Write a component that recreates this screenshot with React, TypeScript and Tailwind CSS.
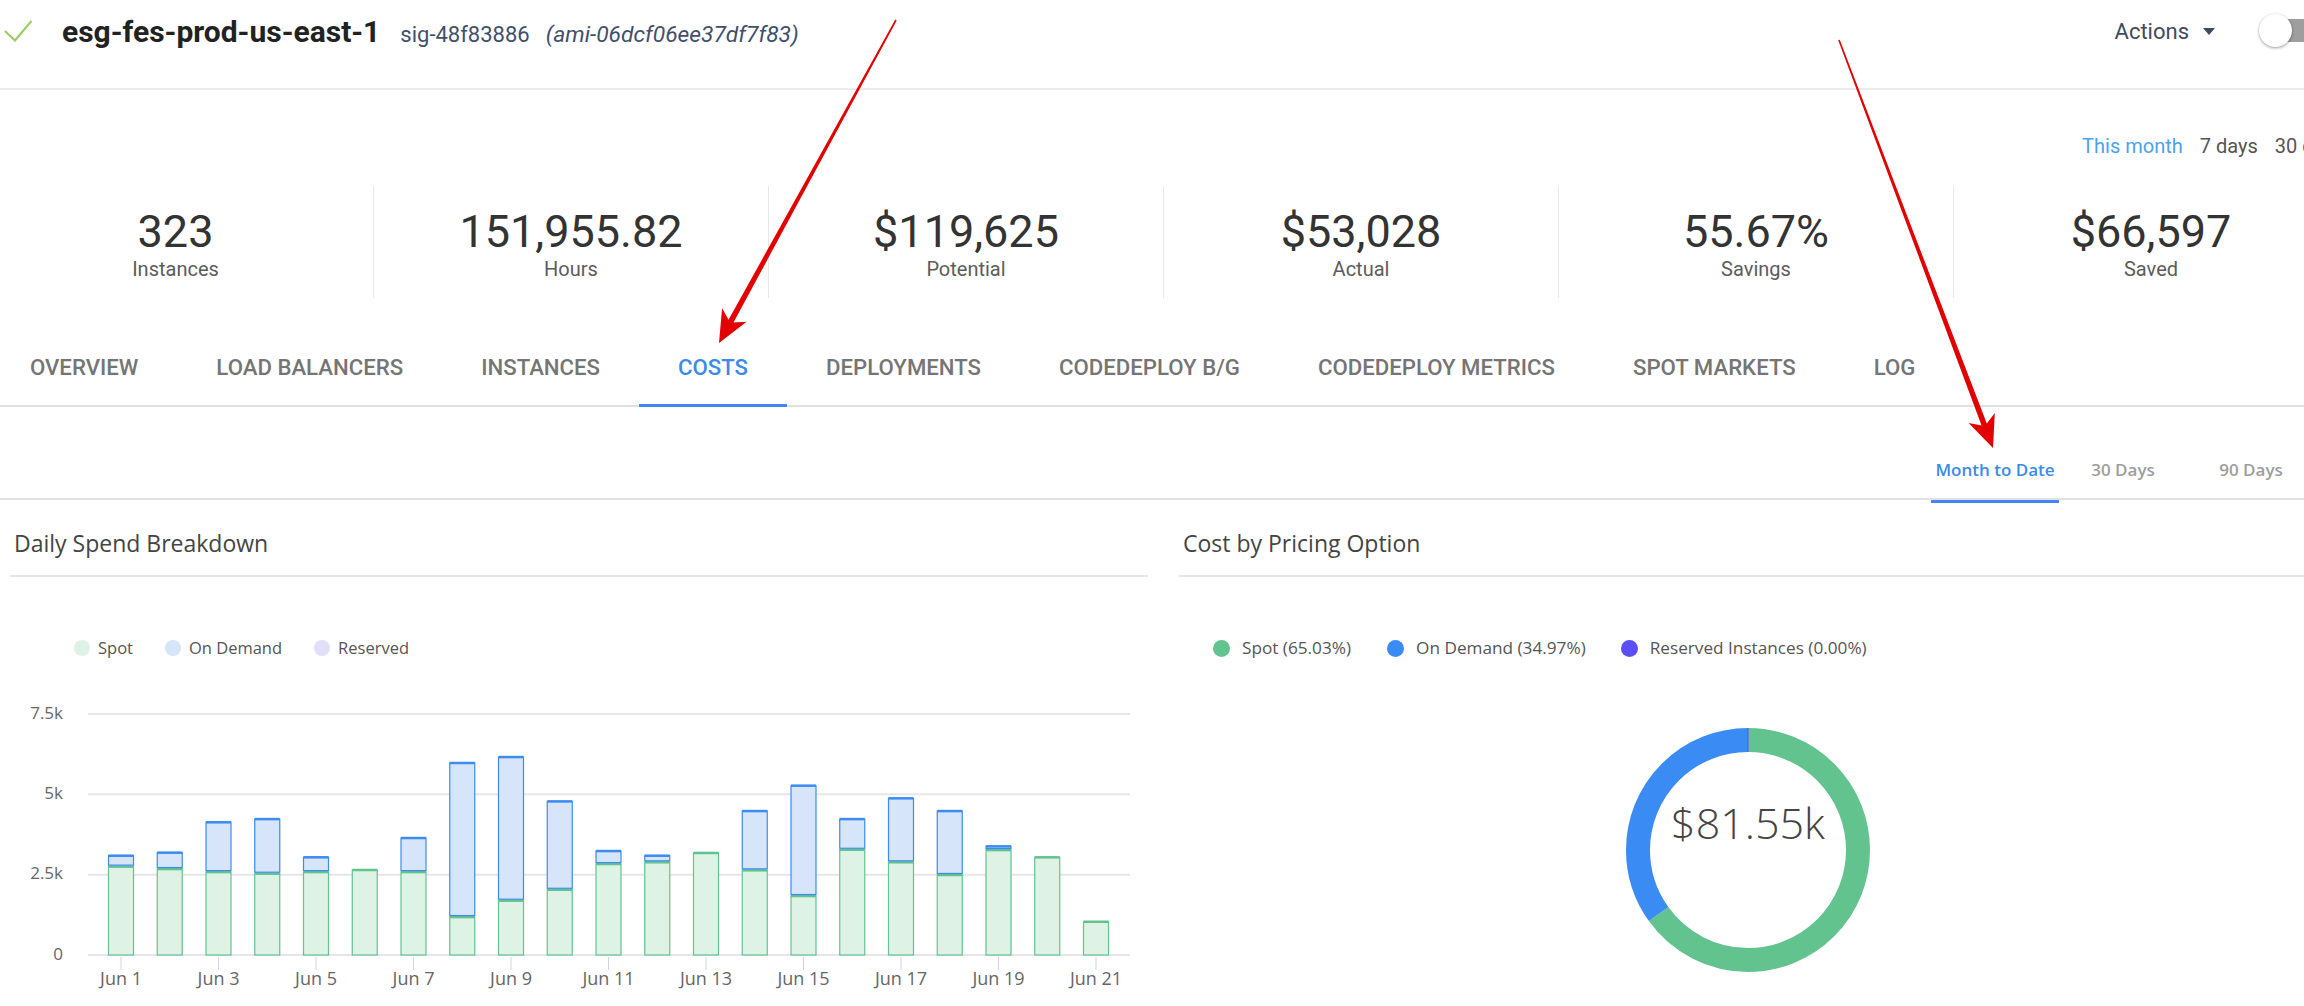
import React from "react";

const days: [number, number][] = [
  [3090, 2750], [3185, 2675], [4130, 2580], [4230, 2530], [3040, 2580],
  [2645, 2645], [3640, 2580], [5975, 1180], [6160, 1690], [4780, 2030],
  [3235, 2830], [3090, 2885], [3175, 3175], [4480, 2635], [5270, 1835],
  [4230, 3275], [4875, 2885], [4480, 2490], [3380, 3265], [3040, 3040],
  [1035, 1035],
];

const tabs = [
  "OVERVIEW", "LOAD BALANCERS", "INSTANCES", "COSTS", "DEPLOYMENTS",
  "CODEDEPLOY B/G", "CODEDEPLOY METRICS", "SPOT MARKETS", "LOG",
];

const stats = [
  ["323", "Instances"], ["151,955.82", "Hours"], ["$119,625", "Potential"],
  ["$53,028", "Actual"], ["55.67%", "Savings"], ["$66,597", "Saved"],
];

const yOf = (v: number) => 283 - (v / 7500) * 241;
const xOf = (i: number) => 111 + i * 48.75;

function DailyChart() {
  const bw = 25;
  return (
    <svg width={1138} height={336} className="block mt-[12px]">
      {[0, 2500, 5000, 7500].map((v, i) => (
        <g key={v}>
          <line x1={78} x2={1120} y1={yOf(v)} y2={yOf(v)} stroke="#e6e6e6" strokeWidth={2} />
          <text x={53} y={yOf(v)} textAnchor="end" dominantBaseline="middle" fontFamily="Open Sans" fontSize={17} fill="#666">
            {["0", "2.5k", "5k", "7.5k"][i]}
          </text>
        </g>
      ))}
      {days.map(([total, spot], i) => {
        const x = xOf(i) - bw / 2;
        const y0 = yOf(0);
        const ys = yOf(spot);
        const yt = yOf(total);
        return (
          <g key={i}>
            <rect x={x} y={ys} width={bw} height={y0 - ys} fill="#dff2e6" stroke="#62c38f" strokeWidth={1.2} />
            <line x1={x} x2={x + bw} y1={ys} y2={ys} stroke="#62c38f" strokeWidth={2.5} />
            {total > spot && (
              <>
                <rect x={x} y={yt} width={bw} height={ys - yt - 1.5} fill="#d7e5fb" stroke="#3b8bf0" strokeWidth={1.2} />
                <line x1={x} x2={x + bw} y1={yt} y2={yt} stroke="#3b8bf0" strokeWidth={2.5} />
              </>
            )}
          </g>
        );
      })}
      {days.map((_, i) =>
        i % 2 === 0 ? (
          <g key={"t" + i}>
            <line x1={xOf(i)} x2={xOf(i)} y1={285} y2={298} stroke="#cdd6e6" strokeWidth={1} />
            <text x={xOf(i)} y={313} textAnchor="middle" fontFamily="Open Sans" fontSize={18} fill="#666">
              {"Jun " + (i + 1)}
            </text>
          </g>
        ) : null
      )}
    </svg>
  );
}

function Donut() {
  const r = 110;
  const c = 2 * Math.PI * r;
  const g = c * 0.6503;
  return (
    <svg width={244} height={244} className="block mx-auto mt-[68px]">
      <g transform="rotate(-90 122 122)">
        <circle cx={122} cy={122} r={r} fill="none" stroke="#62c38f" strokeWidth={24} strokeDasharray={`${g} ${c}`} />
        <circle cx={122} cy={122} r={r} fill="none" stroke="#3b8bf5" strokeWidth={24} strokeDasharray={`${c - g} ${c}`} strokeDashoffset={-g} />
      </g>
      <line x1={122} x2={122} y1={0} y2={24} stroke="#5b4ef5" strokeWidth={1} />
      <text x={122} y={111} textAnchor="middle" fontFamily="Open Sans" fontWeight={300} fontSize={43} fill="#444">
        $81.55k
      </text>
    </svg>
  );
}

function arrowPoints(x1: number, y1: number, x2: number, y2: number) {
  const dx = x2 - x1;
  const dy = y2 - y1;
  const len = Math.hypot(dx, dy);
  const ux = dx / len, uy = dy / len, px = -uy, py = ux;
  const hl = 32, hw = 14, w0 = 0.8, w1 = 2.8;
  const bx = x2 - ux * hl, by = y2 - uy * hl;
  const sx = x2 - ux * (hl - 7), sy = y2 - uy * (hl - 7);
  const pts = [
    [x1 + px * w0, y1 + py * w0],
    [sx + px * w1, sy + py * w1],
    [bx + px * hw, by + py * hw],
    [x2, y2],
    [bx - px * hw, by - py * hw],
    [sx - px * w1, sy - py * w1],
    [x1 - px * w0, y1 - py * w0],
  ];
  return pts.map((p) => p.join(",")).join(" ");
}

export default function App() {
  return (
    <div className="relative w-[2304px] h-[1006px] overflow-hidden bg-white font-['Roboto',sans-serif]">
      <div className="w-[2350px]">
        {/* Header */}
        <div className="h-[90px] border-b-2 border-[#ececec]">
          <div className="h-[62px] flex items-center justify-between pr-[31px]">
            <div className="flex items-center pl-[4px]">
              <svg width={28} height={22} viewBox="0 0 28 22">
                <polyline points="1,11 11,20.5 27.5,1" fill="none" stroke="#9ccc65" strokeWidth={2.2} />
              </svg>
              <div className="flex items-baseline ml-[30px]">
                <span className="text-[30px] font-bold text-[#222]">esg-fes-prod-us-east-1</span>
                <span className="ml-[20px] text-[22px] text-[#3f506b]">sig-48f83886</span>
                <span className="ml-[16px] text-[22.8px] italic text-[#3f506b]">(ami-06dcf06ee37df7f83)</span>
              </div>
            </div>
            <div className="flex items-center">
              <span className="text-[22px] text-[#3e4a5e]">Actions</span>
              <svg width={12} height={7} viewBox="0 0 12 7" className="ml-[14px]">
                <polygon points="0,0 12,0 6,7" fill="#3e4a5e" />
              </svg>
              <div className="relative ml-[44px] w-[60px] h-[34px]">
                <div className="absolute left-[4px] top-[5px] w-[56px] h-[23px] rounded-full bg-[#9e9e9e]" />
                <div className="absolute left-0 top-0 w-[33px] h-[33px] rounded-full bg-white shadow-[0_1px_3px_rgba(0,0,0,0.4)]" />
              </div>
            </div>
          </div>
        </div>

        {/* Period selector */}
        <div className="h-[96px] pt-[44px] flex justify-end gap-[17px] pr-[6px] text-[20px] leading-[24px]">
          <span className="text-[#4aa3f0]">This month</span>
          <span className="text-[#555]">7 days</span>
          <span className="text-[#555]">30 days</span>
        </div>

        {/* Stats */}
        <div className="flex h-[112px] ml-[-22px]">
          {stats.map(([v, l], i) => (
            <div key={l} className={"w-[395px] flex flex-col items-center pt-[22px] " + (i > 0 ? "border-l border-[#e8e8e8]" : "")}>
              <div className="text-[45px] leading-[48px] text-[#333]">{v}</div>
              <div className="mt-[1px] text-[20px] leading-[24px] text-[#5c5c5c]">{l}</div>
            </div>
          ))}
        </div>

        {/* Tabs */}
        <div className="mt-[33px] flex border-b-2 border-[#e0e0e0]">
          <div className="flex ml-[-9px]">
            {tabs.map((t) => (
              <div key={t} className={"relative h-[74px] px-[39px] flex items-center text-[22.2px] font-medium " + (t === "COSTS" ? "text-[#3b8beb]" : "text-[#757575]")}>
                {t}
                {t === "COSTS" && <div className="absolute left-0 right-0 bottom-[-2px] h-[3px] bg-[#4285f4]" />}
              </div>
            ))}
          </div>
        </div>

        {/* Sub tabs */}
        <div className="relative h-[93px] flex justify-end items-end pr-[35px] border-b-2 border-[#e2e2e2] font-['Open_Sans',sans-serif] text-[17px] font-semibold">
          {["Month to Date", "30 Days", "90 Days"].map((t, i) => (
            <div key={t} className={"relative w-[128px] text-center pb-[16px] leading-[24px] " + (i === 0 ? "text-[#3b8beb]" : "text-[#9e9e9e]")}>
              {t}
              {i === 0 && <div className="absolute left-0 right-0 bottom-[-5px] h-[3px] bg-[#4285f4]" />}
            </div>
          ))}
        </div>

        {/* Panels */}
        <div className="flex font-['Open_Sans',sans-serif]">
          <div className="ml-[10px] w-[1138px]">
            <div className="h-[77px] pt-[28px] pl-[4px] border-b-2 border-[#e6e6e6] text-[23px] leading-[30px] text-[#444]">
              Daily Spend Breakdown
            </div>
            <div className="mt-[59px] pl-[64px] flex items-center h-[24px] text-[16.5px] text-[#555]">
              <span className="w-[16px] h-[16px] rounded-full bg-[#dff2e6]" />
              <span className="ml-[8px]">Spot</span>
              <span className="ml-[32px] w-[16px] h-[16px] rounded-full bg-[#d7e5fb]" />
              <span className="ml-[8px]">On Demand</span>
              <span className="ml-[32px] w-[16px] h-[16px] rounded-full bg-[#e1def7]" />
              <span className="ml-[8px]">Reserved</span>
            </div>
            <DailyChart />
          </div>
          <div className="ml-[31px] w-[1138px]">
            <div className="h-[77px] pt-[28px] pl-[4px] border-b-2 border-[#e6e6e6] text-[23px] leading-[30px] text-[#444]">
              Cost by Pricing Option
            </div>
            <div className="mt-[59px] pl-[34px] flex items-center h-[24px] text-[17.2px] text-[#555]">
              <span className="w-[17px] h-[17px] rounded-full bg-[#62c38f]" />
              <span className="ml-[12px]">Spot (65.03%)</span>
              <span className="ml-[36px] w-[17px] h-[17px] rounded-full bg-[#3b8bf5]" />
              <span className="ml-[12px]">On Demand (34.97%)</span>
              <span className="ml-[35px] w-[17px] h-[17px] rounded-full bg-[#5b4ef5]" />
              <span className="ml-[12px]">Reserved Instances (0.00%)</span>
            </div>
            <Donut />
          </div>
        </div>
      </div>

      {/* Annotation arrows */}
      <svg className="absolute inset-0 pointer-events-none" width={2304} height={1006}>
        <polygon points={arrowPoints(896, 20, 719, 343)} fill="#e30000" />
        <polygon points={arrowPoints(1839, 40, 1993, 448)} fill="#e30000" />
      </svg>
    </div>
  );
}
